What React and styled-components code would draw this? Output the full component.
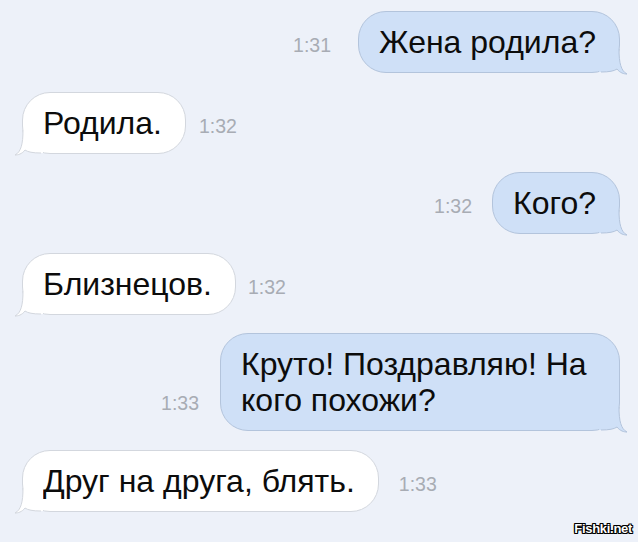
import styled, { createGlobalStyle } from "styled-components"

const GlobalStyle = createGlobalStyle`
  html, body {
    margin: 0;
    padding: 0;
    background: #edf1f9;
  }
  * {
    box-sizing: border-box;
  }
`

const messages = [
  { out: true, text: "Жена родила?", time: "1:31", gap: 27 },
  { out: false, text: "Родила.", time: "1:32", gap: 13 },
  { out: true, text: "Кого?", time: "1:32", gap: 20 },
  { out: false, text: "Близнецов.", time: "1:32", gap: 12 },
  { out: true, text: "Круто! Поздравляю! На кого похожи?", time: "1:33", gap: 21 },
  { out: false, text: "Друг на друга, блять.", time: "1:33", gap: 20 },
]

const Tail = ({ out }) => (
  <TailSvg $out={out} width="30" height="30" viewBox="0 0 30 30">
    <path
      d="M0 4 L20 4 L20 4 C20 18 22 26 28 29 C25 29 21 28 18 24 Q14 27 2 27 L0 27 Z"
      fill={out ? "#cfe0f7" : "#ffffff"}
    />
    <path
      d="M20 4 C20 18 22 26 28 29 C25 29 21 28 18 24 Q14 27 2 27"
      fill="none"
      stroke={out ? "#b3c4dc" : "#d3d7de"}
      strokeWidth="1"
    />
  </TailSvg>
)

const App = () => {
  return (
    <Page>
      <GlobalStyle />
      {messages.map((m, i) => (
        <Row key={i} $out={m.out}>
          {m.out && <Time $gap={m.gap} $out>{m.time}</Time>}
          <Bubble $out={m.out}>
            {m.text}
            <Tail out={m.out} />
          </Bubble>
          {!m.out && <Time $gap={m.gap}>{m.time}</Time>}
        </Row>
      ))}
      <Watermark>Fishki.net</Watermark>
    </Page>
  )
}
export default App

const Page = styled.div`
  position: relative;
  width: 638px;
  height: 542px;
  overflow: hidden;
  background: #edf1f9;
  padding: 11px 18px 0 22px;
  display: flex;
  flex-direction: column;
  gap: 18.5px;
  font-family: "Liberation Sans", Arial, sans-serif;
`
const Row = styled.div`
  display: flex;
  align-items: flex-end;
  justify-content: ${(p) => (p.$out ? "flex-end" : "flex-start")};
`
const Bubble = styled.div`
  position: relative;
  max-width: 400px;
  padding: 12px 23px 12px 20px;
  border-radius: 28px;
  font-size: 32px;
  line-height: 36px;
  color: #0c0c0c;
  background: ${(p) => (p.$out ? "#cfe0f7" : "#ffffff")};
  border: 1px solid ${(p) => (p.$out ? "#b3c4dc" : "#d3d7de")};
`
const TailSvg = styled.svg`
  position: absolute;
  bottom: -3px;
  ${(p) => (p.$out ? "right: -10px;" : "left: -10px; transform: scaleX(-1);")}
  overflow: visible;
`
const Time = styled.span`
  font-size: 19.5px;
  line-height: 19px;
  color: #a8acb4;
  padding-bottom: 18px;
  ${(p) => (p.$out ? `margin-right: ${p.$gap}px;` : `margin-left: ${p.$gap}px;`)}
`
const Watermark = styled.div`
  position: absolute;
  right: 6px;
  bottom: 6px;
  font-family: "Liberation Sans", Arial, sans-serif;
  font-weight: bold;
  font-size: 13px;
  letter-spacing: -0.3px;
  color: #ffffff;
  text-shadow: 1px 0 0 #000, -1px 0 0 #000, 0 1px 0 #000, 0 -1px 0 #000,
    1px 1px 0 #000, -1px -1px 0 #000, 1px -1px 0 #000, -1px 1px 0 #000;
`
